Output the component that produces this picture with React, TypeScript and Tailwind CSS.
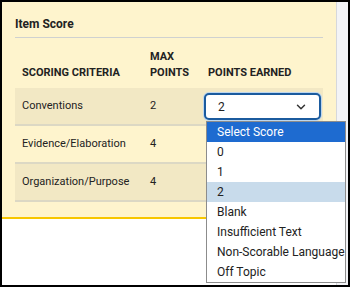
import { ChevronDown } from "lucide-react";

const ROWS = [
  { name: "Conventions", max: "2", shaded: true },
  { name: "Evidence/Elaboration", max: "4", shaded: false },
  { name: "Organization/Purpose", max: "4", shaded: true },
];

const OPTIONS = [
  "Select Score",
  "0",
  "1",
  "2",
  "Blank",
  "Insufficient Text",
  "Non-Scorable Language",
  "Off Topic",
];

export default function App() {
  return (
    <div
      className="relative h-[287px] w-[350px] overflow-hidden border-2 border-black bg-white text-[#222]"
      style={{ fontFamily: "Roboto, 'Liberation Sans', sans-serif" }}
    >
      <div className="flex h-full">
        <div className="w-[334px] shrink-0">
          <div className="border-b-2 border-[#f7c600] bg-[#fef4cd] px-[13px] pb-[15px] pt-[14px]">
            <h2 className="pb-[5px] text-[12px] font-bold leading-[16px]">Item Score</h2>
            <div className="h-px bg-[#cfd1d0]" />
            <div className="mt-[11px] grid grid-cols-[128px_58px_1fr] items-end px-[7px] pb-[7px] text-[11px] font-bold uppercase leading-[16px]">
              <span>Scoring Criteria</span>
              <span>
                Max
                <br />
                Points
              </span>
              <span>Points Earned</span>
            </div>
            {ROWS.map((r) => (
              <div
                key={r.name}
                className={`grid h-[38px] grid-cols-[128px_58px_1fr] items-center border-b-2 border-[#dcd8c4] px-[7px] text-[11px] ${
                  r.shaded ? "bg-[#f2e8c4]" : "bg-[#fef4cd]"
                }`}
              >
                <span>{r.name}</span>
                <span>{r.max}</span>
                <span />
              </div>
            ))}
          </div>
        </div>
        <div className="flex-1 border-l border-[#d6d8dc] bg-[#f3f4f7]" />
      </div>

      <div className="absolute left-[202px] top-[91px] flex h-[27px] w-[117px] items-center justify-between rounded-[5px] border-2 border-[#1b5b9e] bg-white pl-[12px] pr-[11px] text-[12px] shadow-[0_0_0_1px_#bcd6ee]">
        <span>2</span>
        <ChevronDown size={14} strokeWidth={2.5} className="text-[#333]" />
      </div>

      <ul className="absolute left-[204px] top-[119px] w-[140px] border border-[#8c8c8c] bg-white text-[12px]">
        {OPTIONS.map((o, i) => (
          <li
            key={o}
            className={`h-[20px] whitespace-nowrap pl-[10px] leading-[20px] ${
              i === 0 ? "bg-[#1e6bd0] text-white" : i === 3 ? "bg-[#c8dbeb]" : ""
            }`}
          >
            {o}
          </li>
        ))}
      </ul>
    </div>
  );
}
